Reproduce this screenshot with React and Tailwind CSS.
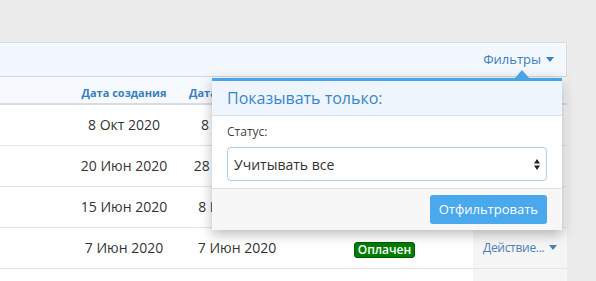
import React from "react";

const rows = [
  { created: "8 Окт 2020", updated: "8 Окт 2020" },
  { created: "20 Июн 2020", updated: "28 Июн 2020" },
  { created: "15 Июн 2020", updated: "8 Июл 2020" },
  { created: "7 Июн 2020", updated: "7 Июн 2020", paid: true },
  { created: "", updated: "" },
];

const Caret = ({ color = "#3a7fbf" }) => (
  <svg width="8" height="5" viewBox="0 0 8 5" className="inline-block ml-[5px]">
    <path d="M0 0 L8 0 L4 5 Z" fill={color} />
  </svg>
);

const App = () => {
  return (
    <div
      className="relative w-[596px] h-[281px] overflow-hidden bg-[#ececec] pt-[42px]"
      style={{ fontFamily: '"Open Sans", "Noto Sans", sans-serif' }}
    >
      <div className="w-[567px] bg-white border-t border-r border-[#d6dbe1] rounded-tr-[4px]">
        {/* toolbar */}
        <div className="h-[34px] bg-[#f3f8fe] border-b border-[#d3d8dd] flex items-center justify-end pr-[12px]">
          <span className="text-[13px] text-[#3a7fbf] flex items-center">
            Фильтры
            <Caret />
          </span>
        </div>

        <table className="w-full table-fixed border-collapse">
          <colgroup>
            <col className="w-[60px]" />
            <col className="w-[128px]" />
            <col className="w-[98px]" />
            <col className="w-[187px]" />
            <col className="w-[94px]" />
          </colgroup>
          <thead>
            <tr className="h-[27px] bg-[#f6f9fd] border-b-2 border-[#d9dde1]">
              <th></th>
              <th className="text-[11px] font-bold text-[#3a7fc0] text-center pt-[6px] whitespace-nowrap">Дата создания</th>
              <th className="text-[11px] font-bold text-[#3a7fc0] text-center pt-[6px] whitespace-nowrap">Дата изменения</th>
              <th className="text-[11px] font-bold text-[#3a7fc0] text-center pt-[6px] pl-[10px]">Статус</th>
              <th className="bg-[#f3f3f3]"></th>
            </tr>
          </thead>
          <tbody>
            {rows.map((row, i) => (
              <tr key={i} className="h-[41px] border-b border-[#e3e3e3]">
                <td></td>
                <td className="text-[14px] text-[#333] text-center whitespace-nowrap">{row.created}</td>
                <td className="text-[14px] text-[#333] text-center whitespace-nowrap">{row.updated}</td>
                <td className="text-center pl-[10px]">
                  {row.paid && (
                    <span className="inline-block bg-[#007d00] border border-[#005a00] rounded-[3px] text-white text-[12px] font-semibold leading-[13px] px-[3px] pb-[1px]">
                      Оплачен
                    </span>
                  )}
                </td>
                <td className="bg-[#f5f5f5] pl-[10px] whitespace-nowrap">
                  {row.created && (
                    <span className="text-[12px] tracking-[-0.3px] text-[#4a7fb8] flex items-center">
                      Действие...
                      <Caret color="#4a7fb8" />
                    </span>
                  )}
                </td>
              </tr>
            ))}
          </tbody>
        </table>
      </div>

      {/* filter popover */}
      <div className="absolute left-[212px] top-[78px] w-[350px] bg-white border-t-[3px] border-[#49a4e8] shadow-[0_4px_12px_rgba(0,0,0,0.28)]">
        <div className="absolute -top-[11px] left-[303px] w-0 h-0 border-l-[7px] border-r-[7px] border-b-[8px] border-l-transparent border-r-transparent border-b-[#49a4e8]" />
        <div className="h-[35px] bg-[#eef5fd] border-b border-[#dadfe4] flex items-center px-[15px] text-[16px] text-[#3a86c8]">
          Показывать только:
        </div>
        <div className="px-[15px] pt-[7px] pb-[7px]">
          <div className="text-[12px] text-[#444] mb-[6px]">Статус:</div>
          <div className="h-[34px] border border-[#a9d0f0] rounded-[4px] flex items-center justify-between pl-[6px] pr-[6px]">
            <span className="text-[14px] text-[#333]">Учитывать все</span>
            <svg width="6" height="11" viewBox="0 0 6 11">
              <path d="M0 4.5 L6 4.5 L3 0 Z" fill="#222" />
              <path d="M0 6.5 L6 6.5 L3 11 Z" fill="#222" />
            </svg>
          </div>
        </div>
        <div className="h-[42px] bg-[#f7f7f7] border-t border-[#e1e1e1] flex items-center justify-end pr-[15px]">
          <button className="h-[29px] px-[9px] bg-[#4aa8ec] text-white text-[13px] rounded-[3px]">
            Отфильтровать
          </button>
        </div>
      </div>
    </div>
  );
};

export default App;
